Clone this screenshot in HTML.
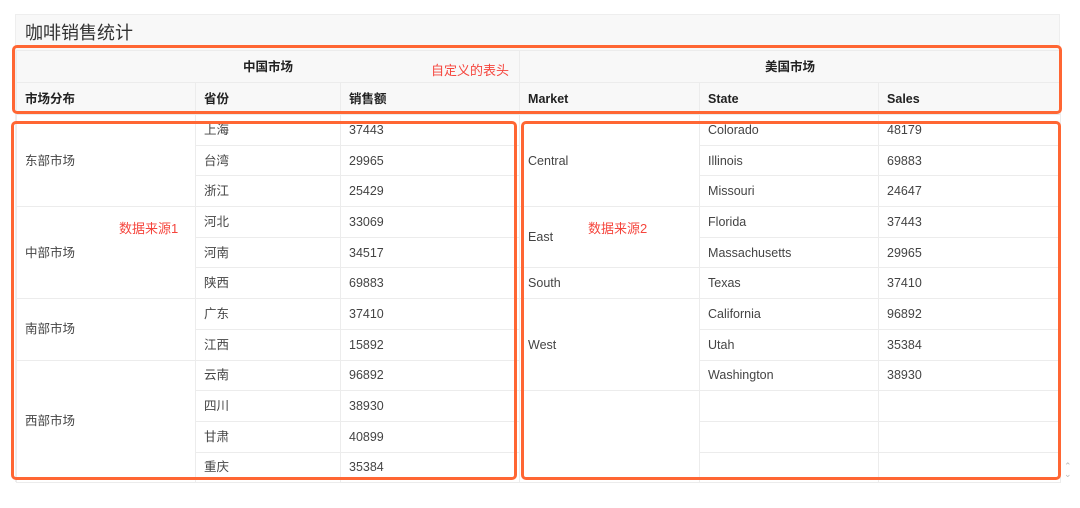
<!DOCTYPE html>
<html><head><meta charset="utf-8"><style>
*{margin:0;padding:0;box-sizing:border-box}
body{width:1080px;height:508px;background:#fff;font-family:"Liberation Sans","Noto Sans CJK SC",sans-serif;color:#333;position:relative;overflow:hidden}
.wrap{position:absolute;left:15px;top:14px;width:1045px;height:468px;background:#f8f8f8;border:1px solid #eee}
.title{position:absolute;left:9px;top:6px;font-size:18px;line-height:24px;color:#333}
table{position:absolute;left:0;top:35px;width:1044px;border-collapse:collapse;table-layout:fixed;font-size:12.5px;line-height:14px}
td,th{border:1px solid #ececec;padding:0 8px;text-align:left;white-space:nowrap;overflow:hidden;vertical-align:middle}
thead tr{height:32px}
th{background:#f8f8f8;font-weight:bold;color:#222}
th.c{text-align:center}
tbody td{background:#fff;color:#444;height:30.7px}
.box{position:absolute;border:3px solid #ff6633;border-radius:5px}
.lab{position:absolute;color:#f5453d;font-size:13px}
.sc{position:absolute;left:1064px;top:462px;color:#bbb;font-size:9px;line-height:8px}
</style></head><body>
<div class="wrap">
<div class="title">咖啡销售统计</div>
<table>
<colgroup><col style="width:179px"><col style="width:145px"><col style="width:179px"><col style="width:180px"><col style="width:179px"><col style="width:182px"></colgroup>
<thead>
<tr><th colspan="3" class="c">中国市场</th><th colspan="3" class="c">美国市场</th></tr>
<tr><th>市场分布</th><th>省份</th><th>销售额</th><th>Market</th><th>State</th><th>Sales</th></tr>
</thead>
<tbody>
<tr><td rowspan="3">东部市场</td><td>上海</td><td>37443</td><td rowspan="3">Central</td><td>Colorado</td><td>48179</td></tr>
<tr><td>台湾</td><td>29965</td><td>Illinois</td><td>69883</td></tr>
<tr><td>浙江</td><td>25429</td><td>Missouri</td><td>24647</td></tr>
<tr><td rowspan="3">中部市场</td><td>河北</td><td>33069</td><td rowspan="2">East</td><td>Florida</td><td>37443</td></tr>
<tr><td>河南</td><td>34517</td><td>Massachusetts</td><td>29965</td></tr>
<tr><td>陕西</td><td>69883</td><td>South</td><td>Texas</td><td>37410</td></tr>
<tr><td rowspan="2">南部市场</td><td>广东</td><td>37410</td><td rowspan="3">West</td><td>California</td><td>96892</td></tr>
<tr><td>江西</td><td>15892</td><td>Utah</td><td>35384</td></tr>
<tr><td rowspan="4">西部市场</td><td>云南</td><td>96892</td><td>Washington</td><td>38930</td></tr>
<tr><td>四川</td><td>38930</td><td rowspan="3"></td><td></td><td></td></tr>
<tr><td>甘肃</td><td>40899</td><td></td><td></td></tr>
<tr><td>重庆</td><td>35384</td><td></td><td></td></tr>
</tbody>
</table>
</div>
<div class="box" style="left:12px;top:45px;width:1050px;height:69px"></div>
<div class="box" style="left:11px;top:121px;width:506px;height:359px"></div>
<div class="box" style="left:521px;top:121px;width:540px;height:359px"></div>
<div class="lab" style="left:431px;top:60px">自定义的表头</div>
<div class="lab" style="left:119px;top:218px">数据来源1</div>
<div class="lab" style="left:588px;top:218px">数据来源2</div>
<div class="sc">⌃<br>⌄</div>
</body></html>
